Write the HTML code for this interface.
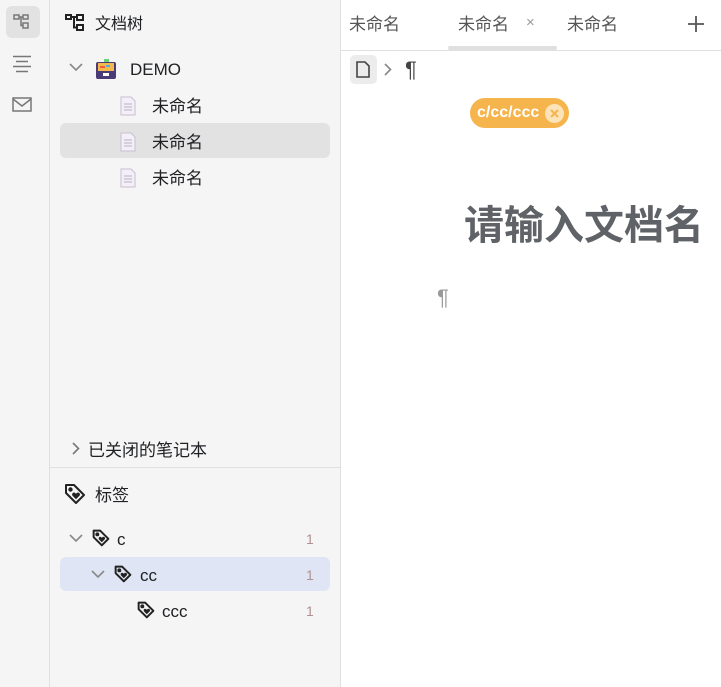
<!DOCTYPE html>
<html><head><meta charset="utf-8"><style>
*{margin:0;padding:0;box-sizing:border-box}
body{width:721px;height:687px;overflow:hidden;font-family:"Liberation Sans","Noto Sans CJK SC",sans-serif;color:#202124;background:#fff;position:relative}
.abs{position:absolute}
.rail{left:0;top:0;width:50px;height:687px;background:#f5f5f5;border-right:1px solid #e0e0e0}
.side{left:50px;top:0;width:291px;height:687px;background:#f5f5f5;border-right:1px solid #e0e0e0}
.t{font-size:16px;position:absolute;white-space:nowrap}
.cnt{position:absolute;left:306px;font-size:14px;color:#b09090}
</style></head><body>
<div class="abs rail">
 <div class="abs" style="left:6px;top:6px;width:34px;height:32px;background:#e2e2e2;border-radius:6px"></div>
 <svg class="abs" style="left:13px;top:13px" width="18" height="18" viewBox="0 0 18 18" fill="none" stroke="#777" stroke-width="1.5"><rect x="1" y="2" width="5" height="4"/><rect x="10" y="2" width="5" height="4"/><rect x="10" y="10" width="5" height="5"/><path d="M6 4h4M8 4v8.5h2"/></svg>
 <svg class="abs" style="left:12px;top:55px" width="20" height="18" viewBox="0 0 20 18" stroke="#777" stroke-width="1.5"><path d="M1 1.5h18M4 6.5h12M1 11.5h18M4 16.5h12"/></svg>
 <svg class="abs" style="left:12px;top:97px" width="20" height="15" viewBox="0 0 20 15" fill="none" stroke="#777" stroke-width="1.5"><rect x="1" y="1" width="18" height="13"/><path d="M1 2l9 7 9-7"/></svg>
</div>
<div class="abs side">
 <svg class="abs" style="left:15px;top:14px" width="20" height="18" viewBox="0 0 20 18" fill="none" stroke="#222" stroke-width="2"><rect x="1" y="1" width="5" height="4"/><rect x="12" y="1" width="6" height="5"/><rect x="12" y="11" width="6" height="5"/><path d="M6 3h6M9 3v10.5h3"/></svg>
 <div class="t" style="left:45px;top:10px">文档树</div>
 <svg class="abs" style="left:19px;top:62px" width="14" height="10" viewBox="0 0 14 10" fill="none" stroke="#888" stroke-width="1.6"><path d="M1 2l6 6 6-6"/></svg>
 <svg class="abs" style="left:45px;top:59px" width="22" height="21" viewBox="0 0 22 21"><rect x="1" y="3" width="20" height="17" rx="2" fill="#4a3a78"/><rect x="3" y="4" width="16" height="8" fill="#f4b94a"/><rect x="9" y="0" width="5" height="3" fill="#6cd07a"/><rect x="5" y="7" width="5" height="2" fill="#e8603a"/><rect x="11" y="6" width="4" height="2" fill="#4ab0e8"/><rect x="8" y="14" width="6" height="3" fill="#fff"/></svg>
 <div class="t" style="left:80px;top:60px;font-size:17px">DEMO</div>
 <div class="abs" style="left:10px;top:123px;width:270px;height:35px;background:#e2e2e2;border-radius:6px"></div>
 <svg class="abs" style="left:70px;top:96px" width="16" height="20" viewBox="0 0 16 20"><path d="M1 1h10l4 4v14H1z" fill="#f3eef8" stroke="#c8c0d4"/><path d="M4 8h8M4 11h8M4 14h8" stroke="#b8b0c4"/></svg>
 <div class="t" style="left:102px;top:92px;font-size:17px">未命名</div>
 <svg class="abs" style="left:70px;top:132px" width="16" height="20" viewBox="0 0 16 20"><path d="M1 1h10l4 4v14H1z" fill="#f3eef8" stroke="#c8c0d4"/><path d="M4 8h8M4 11h8M4 14h8" stroke="#b8b0c4"/></svg>
 <div class="t" style="left:102px;top:128px;font-size:17px">未命名</div>
 <svg class="abs" style="left:70px;top:168px" width="16" height="20" viewBox="0 0 16 20"><path d="M1 1h10l4 4v14H1z" fill="#f3eef8" stroke="#c8c0d4"/><path d="M4 8h8M4 11h8M4 14h8" stroke="#b8b0c4"/></svg>
 <div class="t" style="left:102px;top:164px;font-size:17px">未命名</div>
 <svg class="abs" style="left:22px;top:442px" width="8" height="13" viewBox="0 0 8 13" fill="none" stroke="#777" stroke-width="1.6"><path d="M1 1l5.5 5.5L1 12"/></svg>
 <div class="t" style="left:38px;top:436px;font-size:17px">已关闭的笔记本</div>
 <div class="abs" style="left:0;top:467px;width:290px;height:1px;background:#e0e0e0"></div>
 <svg class="abs" style="left:14px;top:483px" width="22" height="22" viewBox="0 0 22 22" fill="none" stroke="#222" stroke-width="2"><path d="M2 2h8l10 10-8 8L2 10z" stroke-linejoin="round"/><circle cx="6.5" cy="6.5" r="1.2" fill="#222"/><path d="M12 15.5l-3-3a1.4 1.4 0 0 1 2-2l1 1 1-1a1.4 1.4 0 0 1 2 2z" fill="#222" stroke-width="1"/></svg>
 <div class="t" style="left:45px;top:481px;font-size:17px">标签</div>
 <svg class="abs" style="left:19px;top:533px" width="14" height="10" viewBox="0 0 14 10" fill="none" stroke="#888" stroke-width="1.6"><path d="M1 2l6 6 6-6"/></svg>
 <svg class="abs" style="left:42px;top:529px" width="18" height="18" viewBox="0 0 22 22" fill="none" stroke="#222" stroke-width="2.4"><path d="M2 2h8l10 10-8 8L2 10z" stroke-linejoin="round"/><circle cx="6.5" cy="6.5" r="1.2" fill="#222"/><path d="M12 15.5l-3-3a1.4 1.4 0 0 1 2-2l1 1 1-1a1.4 1.4 0 0 1 2 2z" fill="#222" stroke-width="1"/></svg>
 <div class="t" style="left:67px;top:530px;font-size:17px">c</div>
 <div class="cnt" style="top:531px;left:256px">1</div>
 <div class="abs" style="left:10px;top:557px;width:270px;height:34px;background:#dfe5f4;border-radius:6px"></div>
 <svg class="abs" style="left:41px;top:569px" width="14" height="10" viewBox="0 0 14 10" fill="none" stroke="#888" stroke-width="1.6"><path d="M1 2l6 6 6-6"/></svg>
 <svg class="abs" style="left:64px;top:565px" width="18" height="18" viewBox="0 0 22 22" fill="none" stroke="#222" stroke-width="2.4"><path d="M2 2h8l10 10-8 8L2 10z" stroke-linejoin="round"/><circle cx="6.5" cy="6.5" r="1.2" fill="#222"/><path d="M12 15.5l-3-3a1.4 1.4 0 0 1 2-2l1 1 1-1a1.4 1.4 0 0 1 2 2z" fill="#222" stroke-width="1"/></svg>
 <div class="t" style="left:90px;top:566px;font-size:17px">cc</div>
 <div class="cnt" style="top:567px;left:256px">1</div>
 <svg class="abs" style="left:87px;top:601px" width="18" height="18" viewBox="0 0 22 22" fill="none" stroke="#222" stroke-width="2.4"><path d="M2 2h8l10 10-8 8L2 10z" stroke-linejoin="round"/><circle cx="6.5" cy="6.5" r="1.2" fill="#222"/><path d="M12 15.5l-3-3a1.4 1.4 0 0 1 2-2l1 1 1-1a1.4 1.4 0 0 1 2 2z" fill="#222" stroke-width="1"/></svg>
 <div class="t" style="left:112px;top:602px;font-size:17px">ccc</div>
 <div class="cnt" style="top:603px;left:256px">1</div>
</div>
<div class="abs" style="left:341px;top:50px;width:380px;height:1px;background:#e0e0e0"></div>
<div class="t" style="left:349px;top:10px;color:#555;font-size:17px">未命名</div>
<div class="t" style="left:458px;top:10px;color:#555;font-size:17px">未命名</div>
<div class="t" style="left:526px;top:14px;color:#999;font-size:15px">×</div>
<div class="abs" style="left:448px;top:46px;width:109px;height:4px;background:#e0e0e0;border-radius:2px"></div>
<div class="t" style="left:567px;top:10px;color:#555;font-size:17px">未命名</div>
<svg class="abs" style="left:688px;top:16px" width="16" height="16" viewBox="0 0 16 16" stroke="#555" stroke-width="1.8"><path d="M8 0v16M0 8h16"/></svg>
<div class="abs" style="left:350px;top:55px;width:27px;height:29px;background:#ececec;border-radius:5px"></div>
<svg class="abs" style="left:356px;top:61px" width="14" height="17" viewBox="0 0 14 17" fill="none" stroke="#444" stroke-width="1.6"><path d="M1 1h8l4 4v11H1z"/></svg>
<svg class="abs" style="left:384px;top:63px" width="8" height="13" viewBox="0 0 8 13" fill="none" stroke="#888" stroke-width="1.6"><path d="M1 1l5.5 5.5L1 12"/></svg>
<div class="t" style="left:405px;top:57px;color:#444;font-size:22px">¶</div>
<div class="abs" style="left:470px;top:98px;width:99px;height:30px;background:#f5b54c;border-radius:15px"></div>
<div class="t" style="left:477px;top:104px;color:#fff;font-size:16px;font-weight:bold">c/cc/ccc</div>
<div class="abs" style="left:545px;top:104px;width:19px;height:19px;border-radius:50%;background:#fde3b8"></div>
<svg class="abs" style="left:549px;top:108px" width="11" height="11" viewBox="0 0 11 11" stroke="#f5b54c" stroke-width="2"><path d="M2 2l7 7M9 2l-7 7"/></svg>
<div class="t" style="left:464px;top:193px;font-size:40px;font-weight:bold;color:#5f6266">请输入文档名</div>
<div class="t" style="left:437px;top:285px;color:#999;font-size:22px">¶</div>
</body></html>
